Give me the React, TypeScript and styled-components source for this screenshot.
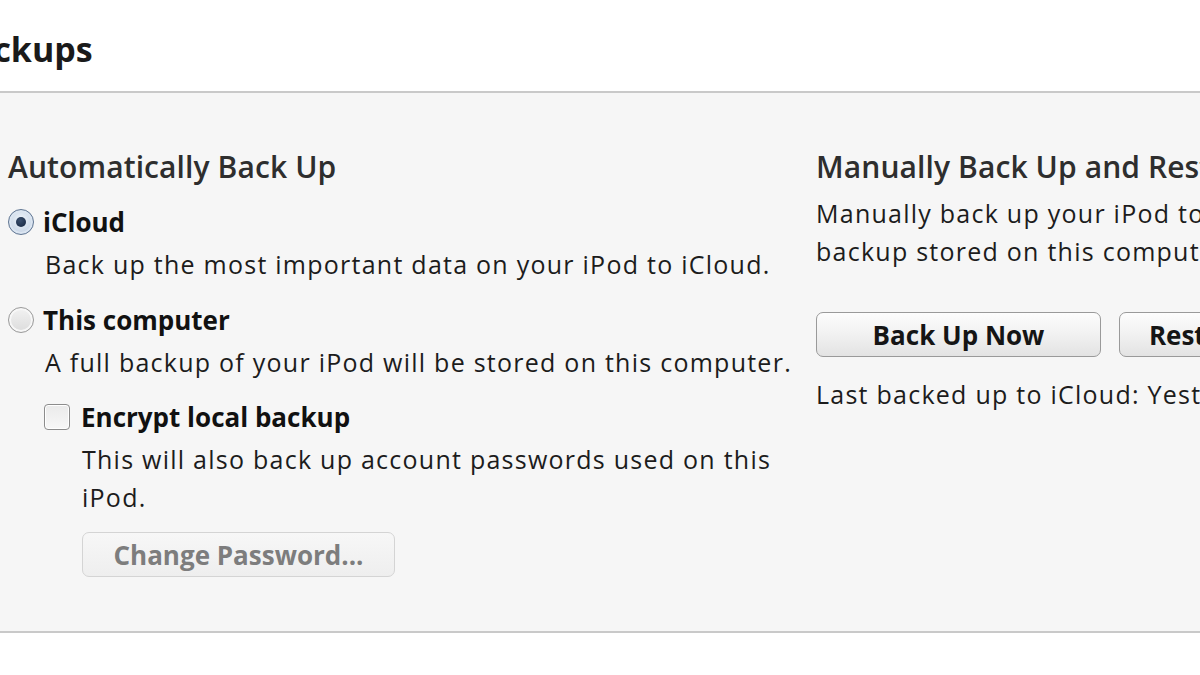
import React from "react";
import styled, { createGlobalStyle } from "styled-components";

const Global = createGlobalStyle`
  html, body { margin: 0; padding: 0; background: #ffffff; overflow: hidden; }
  body { font-family: "Open Sans", "Noto Sans", "Liberation Sans", sans-serif; color: #1c1c1c; }
`;

const Page = styled.div`
  width: 1200px;
  height: 675px;
  overflow: hidden;
  display: flex;
  flex-direction: column;
`;

const TitleBar = styled.div`
  height: 91px;
  display: flex;
  align-items: flex-start;
  overflow: hidden;
`;

const Title = styled.h1`
  margin: 27px 0 0 -50px;
  font-size: 34px;
  line-height: 44px;
  font-weight: 700;
  color: #1a1a1a;
  letter-spacing: 0;
  white-space: nowrap;
`;

const Panel = styled.div`
  height: 538px;
  background: #f6f6f6;
  border-top: 2px solid #c9c9c9;
  border-bottom: 2px solid #c9c9c9;
  display: flex;
  padding-left: 8px;
  overflow: hidden;
`;

const Column = styled.div<{ $width?: number }>`
  display: flex;
  flex-direction: column;
  width: ${(p) => (p.$width ? `${p.$width}px` : "auto")};
  flex-shrink: 0;
  padding-top: 56px;
`;

const Heading = styled.h2`
  margin: 0;
  font-size: 30px;
  line-height: 36px;
  font-weight: 600;
  color: #2e2e2e;
  white-space: nowrap;
  letter-spacing: 0.1px;
`;

const OptionRow = styled.label<{ $indent?: number; $top: number; $gap: number }>`
  display: flex;
  align-items: center;
  gap: ${(p) => p.$gap}px;
  height: 40px;
  margin-top: ${(p) => p.$top}px;
  margin-left: ${(p) => p.$indent ?? 0}px;
`;

const OptionLabel = styled.span`
  font-size: 26px;
  font-weight: 700;
  color: #111111;
  white-space: nowrap;
`;

const Desc = styled.p<{ $indent: number; $top: number }>`
  margin: ${(p) => p.$top}px 0 0 ${(p) => p.$indent}px;
  font-size: 25px;
  line-height: 37.5px;
  letter-spacing: 1.25px;
  color: #1c1c1c;
  white-space: nowrap;
`;

const Radio = styled.span<{ $checked?: boolean }>`
  width: 24px;
  height: 24px;
  border-radius: 50%;
  flex-shrink: 0;
  display: flex;
  align-items: center;
  justify-content: center;
  border: 1.5px solid ${(p) => (p.$checked ? "#5f7592" : "#9b9b9b")};
  background: ${(p) =>
    p.$checked
      ? "radial-gradient(circle at 50% 40%, #eef4fb 0%, #c9d6e6 70%, #aebfd6 100%)"
      : "linear-gradient(#f2f2f2, #dcdcdc)"};
  box-shadow: inset 0 0 0 2px ${(p) => (p.$checked ? "#dbe5f1" : "#f7f7f7")};
  &::after {
    content: "";
    display: ${(p) => (p.$checked ? "block" : "none")};
    width: 10px;
    height: 10px;
    border-radius: 50%;
    background: radial-gradient(circle at 40% 35%, #3a4f6e, #13233d);
  }
`;

const Checkbox = styled.span`
  width: 24px;
  height: 24px;
  border-radius: 4px;
  flex-shrink: 0;
  border: 1.5px solid #8c8c8c;
  background: linear-gradient(#eaeaea, #f8f8f8);
  box-shadow: inset 0 0 0 1px #ffffff;
`;

const Button = styled.button<{ $width: number; $disabled?: boolean }>`
  width: ${(p) => p.$width}px;
  height: 45px;
  flex-shrink: 0;
  border-radius: 7px;
  border: 1.5px solid ${(p) => (p.$disabled ? "#d4d4d4" : "#9a9a9a")};
  background: ${(p) =>
    p.$disabled
      ? "linear-gradient(#f7f7f7, #eeeeee)"
      : "linear-gradient(#fdfdfd 0%, #f1f1f1 50%, #e3e3e3 100%)"};
  font-family: inherit;
  font-size: 26px;
  font-weight: 700;
  color: ${(p) => (p.$disabled ? "#7d7d7d" : "#151515")};
  padding: 0;
  white-space: nowrap;
  overflow: hidden;
  cursor: default;
`;

const ButtonRow = styled.div<{ $indent?: number; $top: number }>`
  display: flex;
  gap: 18px;
  margin-top: ${(p) => p.$top}px;
  margin-left: ${(p) => p.$indent ?? 0}px;
`;

export default function App() {
  return (
    <Page>
      <Global />
      <TitleBar>
        <Title>Backups</Title>
      </TitleBar>
      <Panel>
        <Column $width={808}>
          <Heading>Automatically Back Up</Heading>
          <OptionRow $top={17} $gap={9}>
            <Radio $checked />
            <OptionLabel>iCloud</OptionLabel>
          </OptionRow>
          <Desc $indent={37} $top={4}>
            Back up the most important data on your iPod to iCloud.
          </Desc>
          <OptionRow $top={16} $gap={9}>
            <Radio />
            <OptionLabel>This computer</OptionLabel>
          </OptionRow>
          <Desc $indent={37} $top={4}>
            A full backup of your iPod will be stored on this computer.
          </Desc>
          <OptionRow $top={16} $gap={11} $indent={36}>
            <Checkbox />
            <OptionLabel>Encrypt local backup</OptionLabel>
          </OptionRow>
          <Desc $indent={74} $top={4}>
            This will also back up account passwords used on this
            <br />
            iPod.
          </Desc>
          <ButtonRow $indent={74} $top={16}>
            <Button $width={313} $disabled>
              Change Password...
            </Button>
          </ButtonRow>
        </Column>
        <Column>
          <Heading>Manually Back Up and Restore</Heading>
          <Desc $indent={0} $top={10}>
            Manually back up your iPod to this computer or restore a
            <br />
            backup stored on this computer.
          </Desc>
          <ButtonRow $top={42}>
            <Button $width={285}>Back Up Now</Button>
            <Button $width={285}>Restore Backup...</Button>
          </ButtonRow>
          <Desc $indent={0} $top={19}>
            Last backed up to iCloud: Yesterday 10:42 PM
          </Desc>
        </Column>
      </Panel>
    </Page>
  );
}
